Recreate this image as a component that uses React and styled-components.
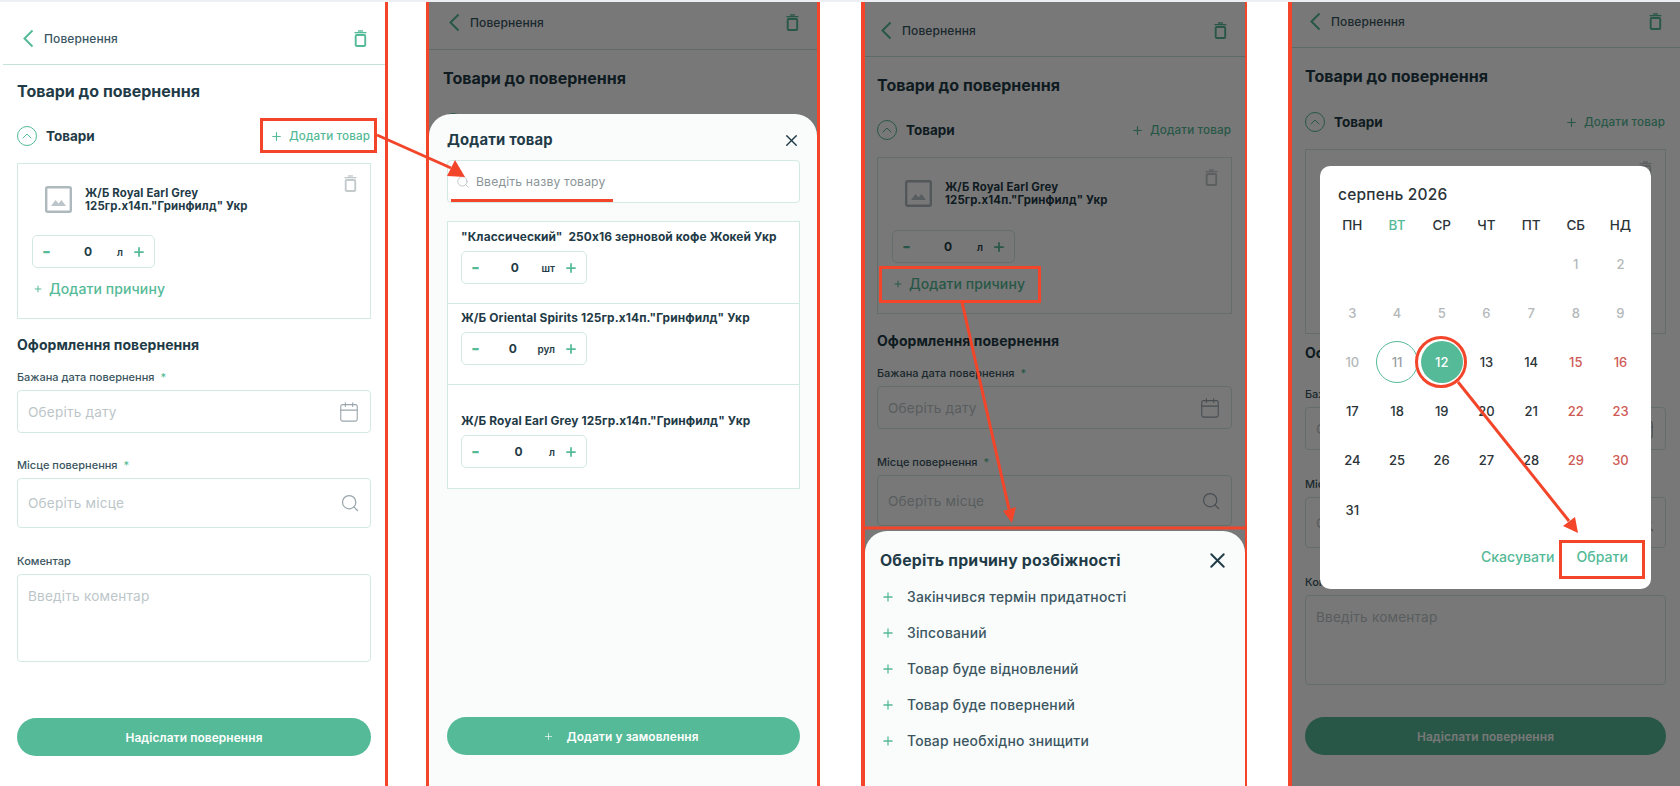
import React from "react";
import styled, { createGlobalStyle } from "styled-components";
import { Calendar, ChevronUp, Plus, Search, X } from "lucide-react";

const GREEN = "#55ba97";
const DARK = "#1f3b47";

const GlobalStyle = createGlobalStyle`
  html, body { margin: 0; padding: 0; background: #fff; }
  * { box-sizing: border-box; }
  body { font-family: Inter, "Noto Sans", sans-serif; color: ${DARK}; }
`;

const Page = styled.div`
  position: relative;
  display: flex;
  width: 1680px;
  height: 786px;
  overflow: hidden;
  background: #fff;
  border-top: 2px solid #eceff3;
`;

// one phone frame, the margins and red edges differ per phone
const Phone = styled.section`
  position: relative;
  flex: none;
  width: ${(p) => p.$width}px;
  margin-left: ${(p) => p.$gap}px;
  background: #fff;
  border-left: ${(p) => p.$left}px solid ${(p) => (p.$left > 0 ? "#f2452a" : "transparent")};
  border-right: ${(p) => p.$right}px solid #f2452a;
`;

const Screen = styled.div`
  display: flex;
  flex-direction: column;
  height: 100%;
`;

const Header = styled.header`
  flex: none;
  display: flex;
  align-items: center;
  height: ${(p) => p.$height}px;
  padding: ${(p) => p.$padding};
  padding-left: ${(p) => p.$left}px;
  padding-right: 18px;
  border-bottom: 1px solid #c4e3d8;
  color: ${GREEN};
`;

const HeaderText = styled.span`
  margin-left: 10px;
  flex: 1;
  font-size: 12px;
  font-weight: 500;
  letter-spacing: 0.1px;
  color: #3b5661;
`;

const Body = styled.div`
  flex: 1;
  display: flex;
  flex-direction: column;
  padding: 0 ${(p) => p.$right}px ${(p) => p.$bottom}px ${(p) => p.$left}px;
`;

const Title = styled.h2`
  margin: ${(p) => p.$top}px 0 0;
  font-size: 16px;
  line-height: 20px;
  font-weight: 700;
`;

const Row = styled.div`
  display: flex;
  align-items: center;
  height: 20px;
  margin-top: ${(p) => p.$top}px;
`;

const CircleIcon = styled.span`
  display: flex;
  align-items: center;
  justify-content: center;
  width: 20px;
  height: 20px;
  border: 1px solid ${GREEN};
  border-radius: 50%;
  color: ${GREEN};
`;

const RowTitle = styled.span`
  flex: 1;
  margin-left: 9px;
  font-size: 13.5px;
  font-weight: 700;
`;

const AddLink = styled.span`
  display: inline-flex;
  align-items: center;
  gap: 6px;
  margin-right: 1px;
  font-size: 11.7px;
  font-weight: 500;
  letter-spacing: 0.1px;
  color: ${GREEN};
`;

const Card = styled.div`
  position: relative;
  flex: none;
  height: ${(p) => p.$height}px;
  margin-top: 17px;
  padding: 22px 14px 0;
  border: 1px solid #d3eae2;
`;

const CardTop = styled.div`
  display: flex;
  align-items: center;
  gap: 13px;
  margin-left: 13px;
`;

const CardName = styled.div`
  font-size: 11.4px;
  line-height: 12.5px;
  font-weight: 700;
  letter-spacing: 0.15px;
`;

const CardTrash = styled.span`
  position: absolute;
  top: 11px;
  right: 13px;
  display: flex;
  color: #c3cacc;
`;

const Stepper = styled.div`
  display: flex;
  align-items: center;
  width: ${(p) => p.$width}px;
  height: 33px;
  padding: 0 8px 0 9px;
  margin-top: ${(p) => p.$top}px;
  border: 1px solid #d3eae2;
  border-radius: 5px;
  background: #fff;
`;

const Minus = styled.span`
  flex: none;
  width: 17px;
  font-size: 19px;
  line-height: 19px;
  font-weight: 700;
  color: ${GREEN};
`;

const StepValue = styled.span`
  flex: 1;
  text-align: center;
  font-size: 12px;
  font-weight: 700;
`;

const StepUnit = styled.span`
  font-size: 10px;
  font-weight: 600;
  margin-right: 9px;
`;

const ReasonLink = styled.div`
  display: flex;
  align-items: center;
  gap: 6px;
  margin: 12px 0 0 1px;
  font-size: 14px;
  line-height: 18px;
  font-weight: 500;
  letter-spacing: 0.1px;
  color: ${GREEN};
`;

const SubTitle = styled.h3`
  margin: ${(p) => p.$top}px 0 0;
  font-size: 14px;
  line-height: 18px;
  font-weight: 700;
  letter-spacing: 0.05px;
`;

const Label = styled.label`
  display: block;
  margin: ${(p) => p.$top}px 0 6px;
  font-size: 11px;
  line-height: 14px;
  font-weight: 500;
  color: #3b5661;

  em {
    margin-left: 3px;
    font-style: normal;
    color: ${GREEN};
  }
`;

const Field = styled.div`
  flex: none;
  display: flex;
  align-items: ${(p) => (p.$area ? "flex-start" : "center")};
  justify-content: space-between;
  height: ${(p) => p.$height}px;
  padding: ${(p) => (p.$area ? "12px 10px" : "0 10px")};
  border: 1px solid #d3eae2;
  border-radius: 4px;
  background: #fff;
  font-size: 13.6px;
  line-height: 18px;
  letter-spacing: 0.2px;
  color: #bcc6c9;
`;

const FieldIcon = styled.span`
  display: flex;
  color: #9aa6ac;
`;

const MainButton = styled.button`
  flex: none;
  display: flex;
  align-items: center;
  justify-content: center;
  gap: 12px;
  width: 100%;
  height: 38px;
  margin-top: auto;
  padding: 0 ${(p) => p.$nudge || 0}px 0 0;
  border: 0;
  border-radius: 19px;
  background: ${GREEN};
  color: #fff;
  font-family: inherit;
  font-size: 11.9px;
  font-weight: 600;
  letter-spacing: 0.1px;
`;

const Dim = styled.div`
  position: absolute;
  inset: 0;
  background: rgba(0, 0, 0, 0.53);
`;

const Sheet = styled.div`
  position: absolute;
  left: 0;
  right: 0;
  bottom: 0;
  top: ${(p) => p.$top}px;
  display: flex;
  flex-direction: column;
  border-radius: 22px 22px 0 0;
  background: #fafbfb;
`;

const SheetHead = styled.div`
  display: flex;
  align-items: center;
  justify-content: space-between;
  color: ${DARK};
`;

const CloseButton = styled.span`
  display: flex;
  margin-right: ${(p) => p.$shift}px;
`;

const AddSheet = styled(Sheet)`
  padding: 16px 17px 31px 18px;
`;

const SheetTitle = styled.h3`
  margin: 0;
  font-size: ${(p) => p.$size}px;
  line-height: 20px;
  font-weight: 700;
  letter-spacing: 0.2px;
`;

const SearchBox = styled.div`
  display: flex;
  align-items: center;
  gap: 6px;
  height: 43px;
  margin-top: 10px;
  padding-left: 8px;
  border: 1px solid #d3eae2;
  border-radius: 4px;
  background: #fff;
  font-size: 12.2px;
  letter-spacing: 0.15px;
  color: #8b9598;
`;

const GoodsList = styled.div`
  margin-top: 18px;
  border: 1px solid #d3eae2;
  border-bottom: 0;
  background: #fff;
`;

const Goods = styled.div`
  height: ${(p) => p.$height}px;
  padding: ${(p) => p.$top}px 13px 0;
  border-bottom: 1px solid #d3eae2;
`;

const GoodsName = styled.div`
  font-size: 11.9px;
  line-height: 14px;
  font-weight: 700;
  letter-spacing: 0.12px;
  white-space: pre;
`;

const ReasonSheet = styled(Sheet)`
  padding: 17px 15px 0;
`;

const ReasonList = styled.div`
  display: flex;
  flex-direction: column;
  gap: 16px;
  margin-top: 14px;
  padding-left: 1px;
`;

const ReasonItem = styled.div`
  display: flex;
  align-items: center;
  gap: 12px;
  height: 20px;
  font-size: 13.9px;
  font-weight: 500;
  letter-spacing: 0.2px;
  color: #3b5661;

  svg {
    color: ${GREEN};
  }
`;

const Dialog = styled.div`
  position: absolute;
  left: 28px;
  top: 164px;
  width: 331px;
  height: 423px;
  padding: 19px 8px 0 10px;
  border-radius: 10px;
  background: #fff;
`;

const Month = styled.div`
  margin-left: 8px;
  font-size: 15.5px;
  line-height: 20px;
  font-weight: 500;
  letter-spacing: 0.2px;
  color: #2b3438;
`;

const Weekdays = styled.div`
  display: grid;
  grid-template-columns: repeat(7, 44.7px);
  height: 29px;
  margin-top: 5px;
`;

const Weekday = styled.span`
  align-self: center;
  text-align: center;
  font-size: 13.5px;
  font-weight: 500;
  color: ${(p) => (p.$active ? GREEN : "#2b3438")};
`;

const Days = styled.div`
  display: grid;
  grid-template-columns: repeat(7, 44.7px);
  grid-auto-rows: 49.2px;
  height: 295px;
`;

const dayColor = { muted: "#b4b8ba", red: "#cf5a55", plain: "#2b3438", today: "#9aa0a2", selected: "#fff" };

const Day = styled.span`
  justify-self: center;
  align-self: center;
  display: flex;
  align-items: center;
  justify-content: center;
  width: 42px;
  height: 42px;
  border-radius: 50%;
  font-size: 13px;
  font-weight: 500;
  color: ${(p) => dayColor[p.$kind]};
  background: ${(p) => (p.$kind === "selected" ? GREEN : "transparent")};
  border: ${(p) => (p.$kind === "today" ? `1px solid ${GREEN}` : "0")};
`;

const DialogActions = styled.div`
  display: flex;
  justify-content: flex-end;
  gap: 22px;
  margin-top: 11px;
  padding-right: 15px;
  font-size: 14.1px;
  line-height: 24px;
  font-weight: 500;
  color: ${GREEN};
`;

const Annotations = styled.svg`
  position: absolute;
  left: 0;
  top: -2px;
  pointer-events: none;
`;

function BackIcon() {
  return (
    <svg width="12" height="19" viewBox="0 0 12 19" fill="none" stroke="currentColor" strokeWidth="2">
      <path d="M10.5 1.5L2.5 9.5l8 8" />
    </svg>
  );
}

function TrashIcon({ size = 17 }) {
  return (
    <svg width={size * 0.76} height={size} viewBox="0 0 13 17" fill="none" stroke="currentColor">
      <path d="M0.5 2.6h12" strokeWidth="1.4" />
      <path d="M4 0.9h5" strokeWidth="1.4" />
      <rect x="1.7" y="5" width="9.6" height="11" rx="1" strokeWidth="1.9" />
    </svg>
  );
}

function ImageIcon() {
  return (
    <svg width="27" height="27" viewBox="0 0 27 27" fill="none">
      <rect x="1.2" y="1.2" width="24.6" height="24.6" rx="1.5" stroke="#aeb9be" strokeWidth="2.4" />
      <path d="M6 20l4.5-6 3 3.6 3-3.6 4.5 6z" fill="#bcc6ca" />
    </svg>
  );
}

function ProductStepper({ unit, width = 123, top = 0 }) {
  return (
    <Stepper $width={width} $top={top}>
      <Minus>-</Minus>
      <StepValue>0</StepValue>
      <StepUnit>{unit}</StepUnit>
      <Plus size={14} color={GREEN} strokeWidth={3} />
    </Stepper>
  );
}

// visible says how far down the form is drawn: the rest lies behind a sheet
function ReturnForm({
  header,
  headerLeft = 19,
  inset = [14, 14],
  bottom = 31,
  titleTop = 18,
  rowTop = 25,
  visible = "all",
  cardBody = true,
  cardHeight = 156,
  stepperTop = 22,
  subTop = 17,
  labelTop = 16,
  secondTop = 25,
  thirdTop = 26,
  placeHeight = 50,
  areaHeight = 88,
}) {
  const showForm = visible !== "row";
  const showAll = visible === "all";

  return (
    <Screen>
      <Header $height={header[0]} $padding={header[1]} $left={headerLeft}>
        <BackIcon />
        <HeaderText>Повернення</HeaderText>
        <TrashIcon />
      </Header>
      <Body $left={inset[0]} $right={inset[1]} $bottom={bottom}>
        <Title $top={titleTop}>Товари до повернення</Title>
        <Row $top={rowTop}>
          <CircleIcon>
            <ChevronUp size={16} strokeWidth={1.5} />
          </CircleIcon>
          <RowTitle>Товари</RowTitle>
          <AddLink>
            <Plus size={13} strokeWidth={2.2} />
            Додати товар
          </AddLink>
        </Row>
        {showForm && (
          <>
            <Card $height={cardHeight}>
              <CardTrash>
                <TrashIcon />
              </CardTrash>
              {cardBody && (
                <>
                  <CardTop>
                    <ImageIcon />
                    <CardName>
                      Ж/Б Royal Earl Grey
                      <br />
                      125гр.х14п."Гринфилд" Укр
                    </CardName>
                  </CardTop>
                  <ProductStepper unit="л" top={stepperTop} />
                  <ReasonLink>
                    <Plus size={10} strokeWidth={2.4} />
                    Додати причину
                  </ReasonLink>
                </>
              )}
            </Card>
            <SubTitle $top={subTop}>Оформлення повернення</SubTitle>
            <Label $top={labelTop}>
              Бажана дата повернення <em>*</em>
            </Label>
            <Field $height={43}>
              Оберіть дату
              <FieldIcon>
                <Calendar size={22} strokeWidth={1.2} />
              </FieldIcon>
            </Field>
            <Label $top={secondTop}>
              Місце повернення <em>*</em>
            </Label>
            <Field $height={placeHeight}>
              Оберіть місце
              <FieldIcon>
                <Search size={20} strokeWidth={1.5} />
              </FieldIcon>
            </Field>
          </>
        )}
        {showAll && (
          <>
            <Label $top={thirdTop}>Коментар</Label>
            <Field $area $height={areaHeight}>
              Введіть коментар
            </Field>
            <MainButton>Надіслати повернення</MainButton>
          </>
        )}
      </Body>
    </Screen>
  );
}

const goods = [
  { name: '"Классический"  250х16 зерновой кофе Жокей Укр', unit: "шт", height: 82, top: 8 },
  { name: 'Ж/Б Oriental Spirits 125гр.х14п."Гринфилд" Укр', unit: "рул", height: 81, top: 7 },
  { name: 'Ж/Б Royal Earl Grey 125гр.х14п."Гринфилд" Укр', unit: "л", height: 104, top: 29 },
];

const reasons = [
  "Закінчився термін придатності",
  "Зіпсований",
  "Товар буде відновлений",
  "Товар буде повернений",
  "Товар необхідно знищити",
];

const weekdays = ["ПН", "ВТ", "СР", "ЧТ", "ПТ", "СБ", "НД"];

function dayKind(day) {
  if (day === 11) return "today";
  if (day === 12) return "selected";
  if (day < 11) return "muted";
  if ([15, 16, 22, 23, 29, 30].includes(day)) return "red";
  return "plain";
}

function Arrow({ from, to, head }) {
  return (
    <>
      <line x1={from[0]} y1={from[1]} x2={to[0]} y2={to[1]} stroke="#f2452a" strokeWidth="3" />
      <polygon points={head} fill="#f2452a" />
    </>
  );
}

export default function App() {
  const days = Array.from({ length: 31 }, (_, i) => i + 1);

  return (
    <Page>
      <GlobalStyle />

      <Phone $gap={3} $width={385} $left={0} $right={3}>
        <ReturnForm header={[63, "11px 0 0"]} titleTop={16} bottom={30} />
      </Phone>

      <Phone $gap={38} $width={394} $left={3} $right={3}>
        <ReturnForm header={[48, "0 0 6px"]} visible="row" />
        <Dim />
        <AddSheet $top={112}>
          <SheetHead>
            <SheetTitle $size={14.8}>Додати товар</SheetTitle>
            <CloseButton $shift={-1}>
              <X size={19} strokeWidth={1.7} />
            </CloseButton>
          </SheetHead>
          <SearchBox>
            <Search size={14} strokeWidth={1.2} color="#a9b1b4" />
            Введіть назву товару
          </SearchBox>
          <GoodsList>
            {goods.map((item) => (
              <Goods key={item.name} $height={item.height} $top={item.top}>
                <GoodsName>{item.name}</GoodsName>
                <ProductStepper unit={item.unit} width={126} top={7} />
              </Goods>
            ))}
          </GoodsList>
          <MainButton $nudge={5}>
            <Plus size={11} strokeWidth={1.4} />
            Додати у замовлення
          </MainButton>
        </AddSheet>
      </Phone>

      <Phone $gap={41} $width={386} $left={4} $right={2}>
        <ReturnForm
          header={[55, "3px 0 0"]}
          headerLeft={15}
          inset={[12, 13]}
          visible="place"
          cardHeight={157}
          stepperTop={23}
          subTop={18}
          secondTop={26}
          placeHeight={51}
        />
        <Dim />
        <ReasonSheet $top={529}>
          <SheetHead>
            <SheetTitle $size={15.8}>Оберіть причину розбіжності</SheetTitle>
            <CloseButton $shift={0}>
              <X size={25} strokeWidth={1.8} />
            </CloseButton>
          </SheetHead>
          <ReasonList>
            {reasons.map((reason) => (
              <ReasonItem key={reason}>
                <Plus size={14} strokeWidth={2.2} />
                {reason}
              </ReasonItem>
            ))}
          </ReasonList>
        </ReasonSheet>
      </Phone>

      <Phone $gap={41} $width={392} $left={4} $right={0}>
        <ReturnForm
          header={[46, "0 0 6px"]}
          headerLeft={17}
          inset={[13, 14]}
          rowTop={26}
          cardBody={false}
          cardHeight={185}
          subTop={10}
          labelTop={25}
          secondTop={27}
          thirdTop={27}
          placeHeight={51}
          areaHeight={90}
        />
        <Dim />
        <Dialog>
          <Month>серпень 2026</Month>
          <Weekdays>
            {weekdays.map((name) => (
              <Weekday key={name} $active={name === "ВТ"}>
                {name}
              </Weekday>
            ))}
          </Weekdays>
          <Days>
            {Array.from({ length: 5 }, (_, i) => (
              <span key={i} />
            ))}
            {days.map((day) => (
              <Day key={day} $kind={dayKind(day)}>
                {day}
              </Day>
            ))}
          </Days>
          <DialogActions>
            <span>Скасувати</span>
            <span>Обрати</span>
          </DialogActions>
        </Dialog>
      </Phone>

      {/* red review marks drawn on top of the screens */}
      <Annotations width="1680" height="786" viewBox="0 0 1680 786" fill="none">
        <rect x="261.5" y="119.5" width="114" height="32" stroke="#f2452a" strokeWidth="3" />
        <Arrow from={[377, 135]} to={[451, 168]} head="465,177 455,160 447,176" />
        <line x1="451" y1="200.5" x2="613" y2="200.5" stroke="#f2452a" strokeWidth="3" />

        <rect x="880.5" y="267.5" width="159" height="34" stroke="#f2452a" strokeWidth="3" />
        <line x1="861" y1="528" x2="1247" y2="528" stroke="#f2452a" strokeWidth="3" />
        <Arrow from={[962, 302]} to={[1009, 509]} head="1012,523 1003,511 1016,507" />

        <circle cx="1441" cy="362" r="24.5" stroke="#f2452a" strokeWidth="3" />
        <Arrow from={[1458, 382]} to={[1569, 521]} head="1578,533 1563,526 1575,517" />
        <rect x="1560.5" y="541.5" width="83" height="36" stroke="#f2452a" strokeWidth="3" />
      </Annotations>
    </Page>
  );
}
